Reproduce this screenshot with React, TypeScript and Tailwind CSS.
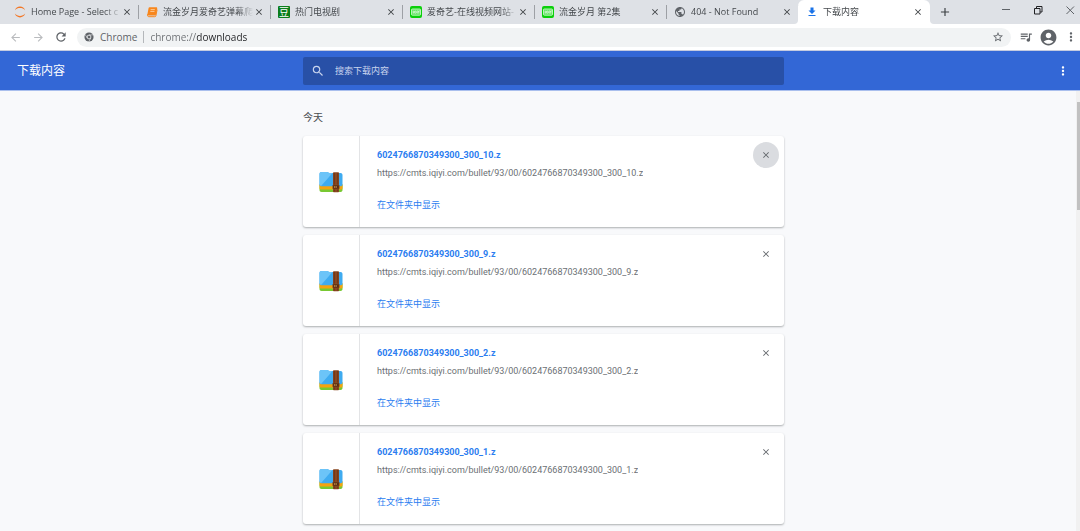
import type { ReactNode } from "react";
import {
      MdAccountCircle,
      MdAdd,
      MdArrowBack,
      MdArrowForward,
      MdClose,
      MdFileDownload,
      MdMoreVert,
      MdPublic,
      MdQueueMusic,
      MdRefresh,
      MdSearch,
      MdStarBorder,
} from "react-icons/md";

type TabInfo = { title: string; icon: ReactNode };

const JupyterIcon = () => (
      <svg viewBox="0 0 12 12" className="size-3" fill="#f37726">
            <path d="M.8 4.400C1.600 1.900 3.600.6 6 .6s4.400 1.300 5.200 3.800C9.800 2.700 8 2.100 6 2.100S2.200 2.700.8 4.400Z" />
            <path d="M.8 7.600c.8 2.500 2.800 3.800 5.200 3.800s4.400-1.300 5.200-3.800C9.800 9.300 8 9.900 6 9.900S2.200 9.300.8 7.600Z" />
      </svg>
);

const BookIcon = () => (
      <svg viewBox="0 0 12 12" className="size-3">
            <path d="M3.500 1.300h6.700c.7 0 1.100.5 1 1.100L9.900 8.800c-.1.500-.5.800-1 .8H2.600c-.8 0-1.400-.6-1.200-1.400l1.200-6.100c.1-.5.4-.8.9-.8Z" fill="#f8861c" />
            <path d="M1.500 8.300c-.2 1.500.3 2.400 1.300 2.400h6c.6 0 1-.3 1.100-.9l1.200-6.200" fill="none" stroke="#f8861c" />
            <path d="M4.600 3.600h4.200M4.300 5.400h4.200" stroke="#ffd9b0" strokeWidth=".8" />
      </svg>
);

const DoubanIcon = () => (
      <span className="flex size-3 items-center justify-center rounded-[1px] bg-[#0b7d1c] text-[10px] leading-3 text-white">
            豆
      </span>
);

const IqiyiIcon = () => (
      <svg viewBox="0 0 12 12" className="size-3">
            <rect width="12" height="12" rx="2" fill="#0bcf0b" />
            <rect x="1.500" y="3" width="9" height="6.200" rx=".8" fill="#5be35b" stroke="#d8ffd8" strokeWidth=".8" />
            <path d="M3.200 4.600v3M8 4.500l.8 1.300.8-1.300M8.800 5.800v1.800M7.200 4.600v3" stroke="#fff" strokeWidth=".7" fill="none" />
            <circle cx="5.200" cy="6.100" r="1.100" fill="none" stroke="#fff" strokeWidth=".7" />
      </svg>
);

const tabs: TabInfo[] = [
      { title: "Home Page - Select c", icon: <JupyterIcon /> },
      { title: "流金岁月爱奇艺弹幕爬", icon: <BookIcon /> },
      { title: "热门电视剧", icon: <DoubanIcon /> },
      { title: "爱奇艺-在线视频网站-", icon: <IqiyiIcon /> },
      { title: "流金岁月 第2集", icon: <IqiyiIcon /> },
      { title: "404 - Not Found", icon: <MdPublic className="size-3 text-[#5f6368]" /> },
      { title: "下载内容", icon: <MdFileDownload className="size-3 text-[#1a73e8]" /> },
];

const downloads = [10, 9, 2, 1].map((part) => `6024766870349300_300_${part}.z`);

const Tab = ({ tab, active }: { tab: TabInfo; active: boolean }) => (
      <div
            className={
                  active
                        ? "relative -ml-px flex h-full w-[132px] min-w-0 items-center rounded-t-md bg-white pr-[7px] pl-2 before:absolute before:bottom-0 before:-left-1 before:size-1 before:rounded-br before:bg-[#dee1e6] before:shadow-[1px_1px_0_1px_white] after:absolute after:-right-1 after:bottom-0 after:size-1 after:rounded-bl after:bg-[#dee1e6] after:shadow-[-1px_1px_0_1px_white]"
                        : "flex h-full w-[132px] min-w-0 items-center pr-[7px] pl-[7px] after:-mr-[7px] after:ml-[6px] after:h-3.5 after:w-px after:bg-[#9da0a5]"
            }
      >
            <span className="shrink-0">{tab.icon}</span>
            <span className="ml-[5px] min-w-0 flex-1 whitespace-nowrap text-[9px] leading-3 text-[#45494d] mask-[linear-gradient(90deg,#000_80%,transparent)]">
                  {tab.title}
            </span>
            <button aria-label="关闭标签页" className="shrink-0">
                  <MdClose className="size-[10px] text-[#3c4043]" />
            </button>
      </div>
);

const TabStrip = () => (
      <div className="flex h-6 shrink-0 bg-[#dee1e6] pl-[7px]">
            {tabs.map((tab, i) => (
                  <Tab key={i} tab={tab} active={i === tabs.length - 1} />
            ))}
            <button aria-label="新标签页" className="ml-2 shrink-0">
                  <MdAdd className="size-[14px] text-[#3c4043]" />
            </button>
            <div className="ml-auto flex h-5 shrink-0 items-center gap-5 pr-1">
                  <button aria-label="最小化">
                        <svg viewBox="0 0 12 12" className="size-3" stroke="#5f6368">
                              <path d="M2 5.500h8" />
                        </svg>
                  </button>
                  <button aria-label="还原">
                        <svg viewBox="0 0 12 12" className="size-3" stroke="#202124" fill="none">
                              <path d="M2.500 4.500h5.500v5.500H2.500zM4.500 4.500V2.500h5.500v5.500H8" />
                        </svg>
                  </button>
                  <button aria-label="关闭">
                        <svg viewBox="0 0 12 12" className="size-3" stroke="#5f6368">
                              <path d="M2.500 2.500l7.500 7.500M10 2.500l-7.500 7.500" />
                        </svg>
                  </button>
            </div>
      </div>
);

const ChromeIcon = () => (
      <svg viewBox="0 0 12 12" className="size-[10px] shrink-0">
            <circle cx="6" cy="6" r="5.500" fill="#5f6368" />
            <circle cx="6" cy="6" r="2.300" fill="#5f6368" stroke="#f1f3f4" />
            <path d="M6 3.500h5M3.900 7.200 1.400 3M8.200 7.200l-2.400 4.300" stroke="#f1f3f4" strokeWidth=".7" />
      </svg>
);

const Toolbar = () => (
      <div className="flex h-[27px] shrink-0 items-center border-b border-[#c5cbe0] bg-white pr-[2px] pl-[9px] text-[#5f6368]">
            <button aria-label="后退">
                  <MdArrowBack className="size-[13px] text-[#b9bbbe]" />
            </button>
            <button aria-label="前进" className="ml-[10px]">
                  <MdArrowForward className="size-[13px] text-[#b9bbbe]" />
            </button>
            <button aria-label="重新加载" className="ml-[9px]">
                  <MdRefresh className="size-[14px]" />
            </button>
            <div className="ml-[9px] flex h-[19px] min-w-0 flex-1 items-center rounded-full bg-[#f1f3f4] pr-[7px] pl-[7px] text-[10px]">
                  <ChromeIcon />
                  <label htmlFor="address" className="ml-[6px] border-r border-[#b4b7ba] pr-[6px] leading-3">
                        Chrome
                  </label>
                  <input
                        id="address"
                        defaultValue="chrome://downloads"
                        className="ml-[6px] min-w-0 flex-1 bg-[linear-gradient(90deg,#6b6e72_46px,#202124_46px)] bg-clip-text leading-4 text-transparent outline-none"
                  />
                  <button aria-label="添加书签">
                        <MdStarBorder className="size-3" />
                  </button>
            </div>
            <button aria-label="媒体控制" className="ml-2">
                  <MdQueueMusic className="size-[14px]" />
            </button>
            <button aria-label="用户" className="ml-[6px]">
                  <MdAccountCircle className="size-[19px]" />
            </button>
            <button aria-label="菜单" className="ml-[6px]">
                  <MdMoreVert className="size-[14px]" />
            </button>
      </div>
);

const PageHeader = () => (
      <header className="grid h-10 shrink-0 grid-cols-[1fr_minmax(0,481px)_1fr] items-center border-b border-[#aabfed] bg-[#3367d6] pl-[7px] text-white">
            <h1 className="pl-[10px] text-[12px] leading-4">下载内容</h1>
            <label className="flex h-7 items-center rounded-xs bg-[#2850a7] pl-2 text-[#c8d4ee]">
                  <MdSearch className="size-[14px] shrink-0" />
                  <input
                        type="search"
                        placeholder="搜索下载内容"
                        className="ml-[10px] min-w-0 flex-1 text-[9px] leading-4 outline-none placeholder:text-[#c8d4ee]"
                  />
            </label>
            <button aria-label="更多操作" className="mr-[10px] justify-self-end">
                  <MdMoreVert className="size-[14px]" />
            </button>
      </header>
);

const ArchiveIcon = () => (
      <svg viewBox="0 0 24 22" className="h-[22px] w-6">
            <path d="M.5 14h23v5c0 1.300-.8 2-2 2h-19c-1.200 0-2-.7-2-2Z" fill="#78c832" />
            <path d="M.5 13h23v4.200c0 .8-.6 1.300-1.500 1.300H2c-.9 0-1.500-.5-1.500-1.300Z" fill="#f5a30f" />
            <path d="M.5 3c0-1.300.8-2 2-2H8c1 0 1.500 1 2.500 1h11c1.200 0 2 .7 2 2v9.500c0 1-.7 1.700-1.700 1.700H2.200c-1 0-1.700-.7-1.700-1.700Z" fill="#3fabf0" />
            <path d="M.5 3c0-1.300.8-2 2-2H8c1 0 1.500 1 2.500 1h3L2.300 14.800c-1-.1-1.800-.6-1.800-1.300Z" fill="#6cc4f8" />
            <rect x="14" y="1.200" width="6" height="20" rx=".8" fill="#88461f" />
            <path d="M15.300 2v18.500M18.700 2v18.500" stroke="#5f2c12" strokeWidth=".6" />
            <rect x="13.800" y="14" width="6.400" height="4" rx=".5" fill="#5a2a10" stroke="#8a5428" strokeWidth=".6" />
            <path d="M15.700 15v2M17.200 15v2" stroke="#e0b15c" strokeWidth=".7" />
      </svg>
);

const DownloadCard = ({ name, focused }: { name: string; focused: boolean }) => (
      <article className="relative flex h-[91px] rounded-[3px] bg-white shadow-[0_1px_2px_rgba(60,64,67,0.4)]">
            <div className="flex w-[57px] shrink-0 items-center justify-center border-r border-[#e3e4e6]">
                  <ArchiveIcon />
            </div>
            <div className="flex min-w-0 flex-1 flex-col items-start pt-3 pl-[17px] text-[9px] leading-[14px]">
                  <a href="#" className="font-bold text-[#2b7df0]">
                        {name}
                  </a>
                  <p className="mt-1 max-w-full truncate text-[#6b6f74]">https://cmts.iqiyi.com/bullet/93/00/{name}</p>
                  <button className="mt-[18px] text-[#2b7df0]">在文件夹中显示</button>
            </div>
            <button
                  aria-label="从列表中移除"
                  className={
                        focused
                              ? "mt-[6px] mr-[5px] flex size-[26px] items-center justify-center rounded-full bg-[#dadce0]"
                              : "mt-[6px] mr-[5px] flex size-[26px] items-center justify-center rounded-full"
                  }
            >
                  <MdClose className="size-[10px] text-[#5f6368]" />
            </button>
      </article>
);

const App = () => {
      return (
            <div className="flex h-screen flex-col overflow-hidden bg-[#f8f9fb] font-['Open_Sans','Noto_Sans_CJK_SC',sans-serif]">
                  <TabStrip />
                  <Toolbar />
                  <PageHeader />
                  <div className="flex min-h-0 flex-1 font-[Roboto,'Noto_Sans_CJK_SC',sans-serif]">
                        <main className="min-w-0 flex-1 overflow-hidden pt-[19px] pl-[11px]">
                              <section className="mx-auto max-w-[481px]">
                                    <h2 className="text-[10px] leading-4 text-[#4a4d51]">今天</h2>
                                    <div className="mt-[10px] flex flex-col gap-2">
                                          {downloads.map((name, i) => (
                                                <DownloadCard key={name} name={name} focused={i === 0} />
                                          ))}
                                    </div>
                              </section>
                        </main>
                        <div className="w-1 shrink-0 bg-[#f1f1f1] pt-[11px] pl-px">
                              <div className="h-[108px] bg-[#c1c1c1]" />
                        </div>
                  </div>
            </div>
      );
};

export default App;
